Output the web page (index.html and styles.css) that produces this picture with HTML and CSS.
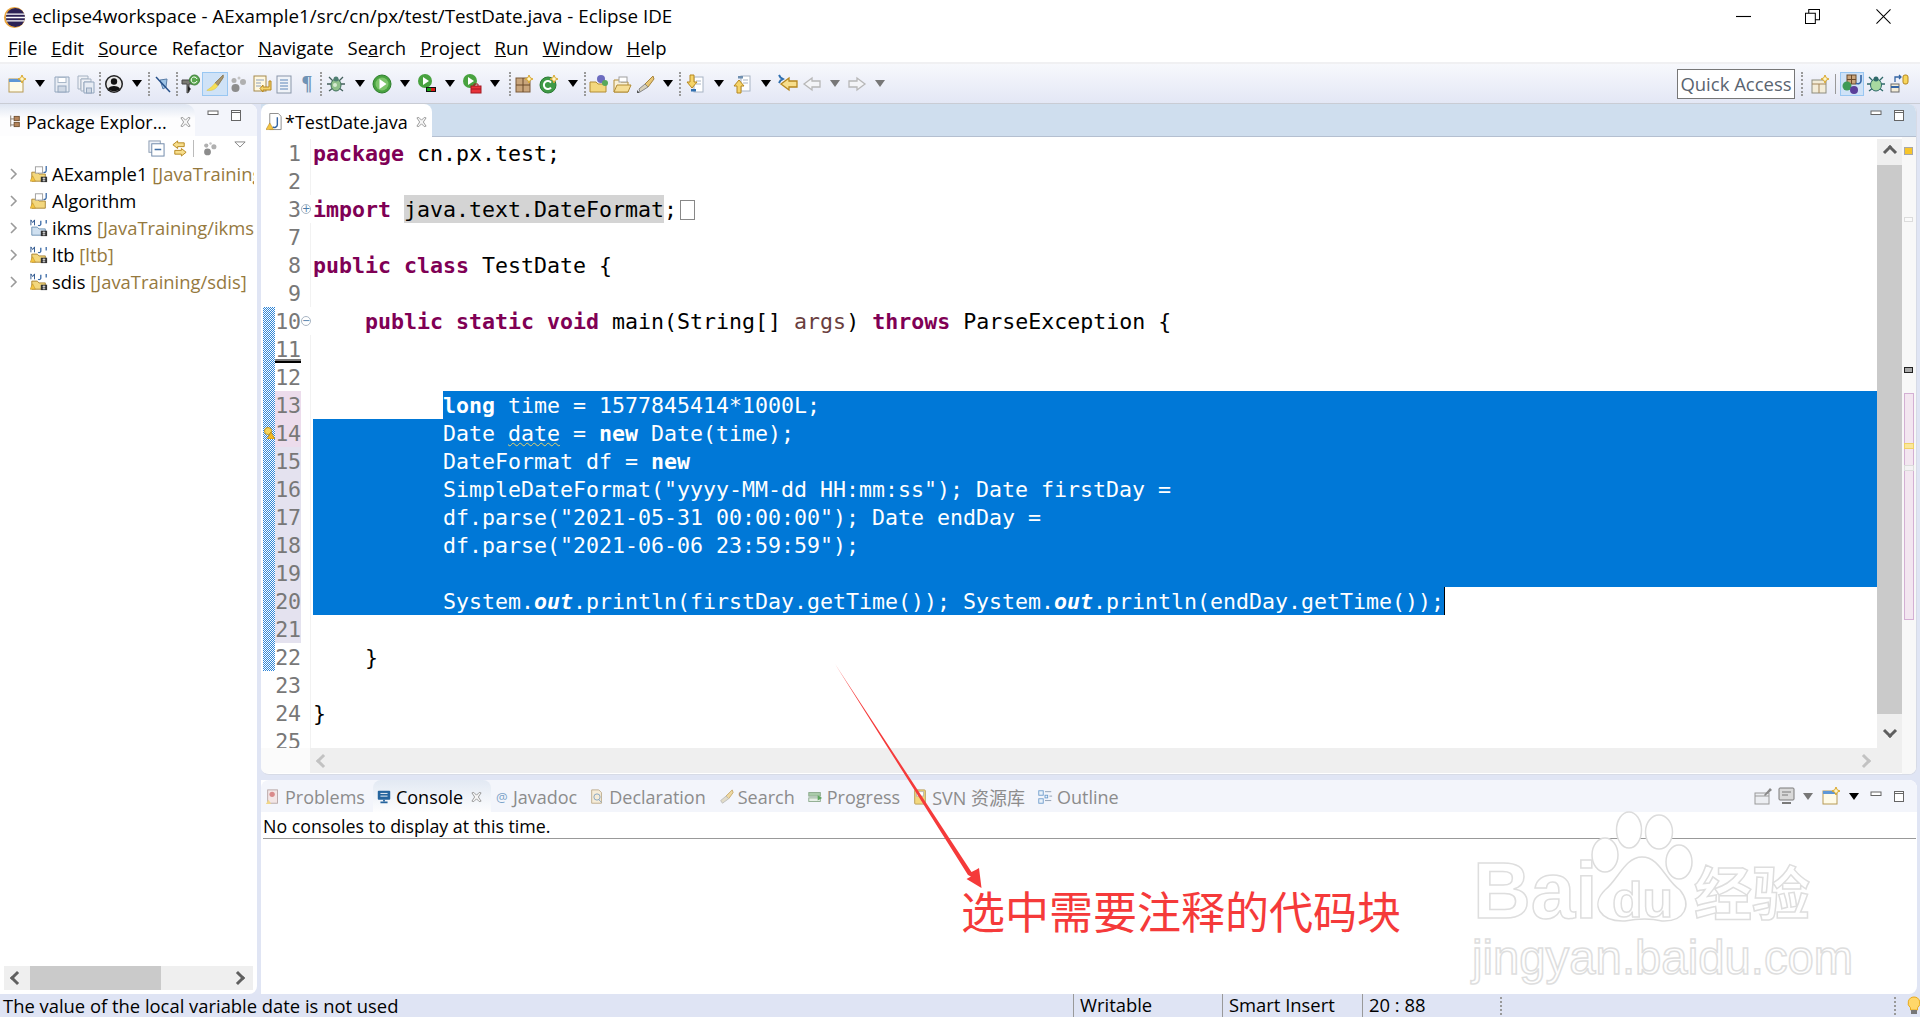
FILE: index.html
```html
<!DOCTYPE html>
<html lang="en">
<head>
<meta charset="utf-8">
<title>eclipse4workspace</title>
<link rel="stylesheet" href="styles.css">
</head>
<body>
<svg class="defs" width="0" height="0">
  <symbol id="new" viewBox="0 0 20 20"><rect x="2" y="5" width="14" height="13" fill="#fffbe8" stroke="#b79a55"/><rect x="2" y="5" width="14" height="3" fill="#5f97d6"/><path d="M15 1l1.2 2.8 2.8 1.2-2.8 1.2-1.2 2.8-1.2-2.8-2.8-1.2 2.8-1.2z" fill="#fff6c8" stroke="#d9a72b"/></symbol>
  <symbol id="save" viewBox="0 0 20 20"><path d="M3 3h14v15H3z" fill="#e8edf4" stroke="#93a6bd"/><rect x="6" y="3.5" width="8" height="5" fill="#fff" stroke="#a9b8c9"/><rect x="6" y="12" width="8" height="6" fill="#cfd8e4" stroke="#93a6bd"/></symbol>
  <symbol id="saveall" viewBox="0 0 20 20"><path d="M2 2h10v3H5v10H2z" fill="#eef1f6" stroke="#a5b2c2"/><path d="M5 5h10v3H8v9H5z" fill="#eef1f6" stroke="#a5b2c2"/><path d="M8 8h10v11H8z" fill="#e8edf4" stroke="#93a6bd"/><rect x="10.500" y="14" width="5" height="5" fill="#cfd8e4" stroke="#93a6bd"/></symbol>
  <symbol id="person" viewBox="0 0 20 20"><circle cx="10" cy="10" r="9" fill="#222"/><circle cx="10" cy="10" r="7.500" fill="#e9e9e9"/><circle cx="10" cy="7.500" r="3.200" fill="#111"/><path d="M4 15c1-4 11-4 12 0-3 3-9 3-12 0z" fill="#111"/></symbol>
  <symbol id="pin" viewBox="0 0 20 20"><path d="M7 6l7-1-1 8-3 2z" fill="#9fc4e6" stroke="#5a7ea8"/><path d="M3 3l14 15" stroke="#26508a" stroke-width="1.500"/></symbol>
  <symbol id="wrench" viewBox="0 0 20 20"><path d="M1 6h11v4H8v8l-2 1V10H1z" fill="#7a7a72" stroke="#444"/><path d="M7 12l3 3-3 3z" fill="#222"/><circle cx="13.500" cy="6" r="5" fill="#5aa84e" stroke="#3e7d3b"/><path d="M16 5a3 3 0 1 0 0 2" fill="none" stroke="#fff"/></symbol>
  <symbol id="brush" viewBox="0 0 22 22"><path d="M20 1l-9 9 3 3 6-9z" fill="#a8956c" stroke="#8a7750"/><path d="M11 10c-2 3-6 6-9 8 5 1 10-1 12-5z" fill="#f6df56" stroke="#d9bf38" stroke-width=".5"/></symbol>
  <symbol id="steps" viewBox="0 0 20 20"><circle cx="6.500" cy="14" r="4" fill="#8c8c8c"/><circle cx="5" cy="6.500" r="2.500" fill="#b0b0b0"/><circle cx="14" cy="8" r="3" fill="#b0b0b0"/><circle cx="10" cy="4" r="1.500" fill="#c6c6c6"/></symbol>
  <symbol id="hist" viewBox="0 0 20 20"><rect x="2" y="2" width="12" height="15" fill="#fff8e0" stroke="#a58a4c"/><path d="M4 6h8M4 9h5M4 12h5" stroke="#8ea0bd"/><path d="M17 7v6h-6v-2l-3 3.500 3 3.500v-2h8V7z" fill="#f5d46a" stroke="#b6871e"/></symbol>
  <symbol id="lines" viewBox="0 0 20 20"><rect x="3" y="2" width="14" height="17" fill="#f0f3f8" stroke="#8996a9"/><path d="M6 6h8M6 9h8M6 12h8M6 15h8" stroke="#5d86b9"/></symbol>
  <symbol id="bug" viewBox="0 0 20 20"><path d="M3 3l4 4M17 3l-4 4M1 10h4M19 10h-4M3 17l4-3M17 17l-4-3" stroke="#44605c" stroke-width="1.300"/><ellipse cx="10" cy="11" rx="5" ry="6" fill="#8fc08a" stroke="#3d6f5a"/><circle cx="10" cy="5" r="2.500" fill="#4f7f72"/><circle cx="9" cy="11" r="2" fill="#d7ead2"/></symbol>
  <symbol id="run" viewBox="0 0 20 20"><circle cx="10" cy="10" r="9" fill="#48a23f" stroke="#2d7e2c"/><circle cx="10" cy="10" r="6.500" fill="#7cc46a"/><path d="M7.500 5l7 5-7 5z" fill="#fff"/></symbol>
  <symbol id="runx" viewBox="0 0 20 20"><circle cx="8" cy="7" r="7" fill="#48a23f"/><path d="M6 3l6 4-6 4z" fill="#fff"/><rect x="9" y="13" width="10" height="5" fill="#111"/><rect x="10" y="14" width="4" height="3" fill="#15a315"/><rect x="14" y="14" width="4" height="3" fill="#d81818"/></symbol>
  <symbol id="runt" viewBox="0 0 20 20"><circle cx="8" cy="7" r="7" fill="#48a23f"/><path d="M6 3l6 4-6 4z" fill="#fff"/><rect x="9" y="12" width="10" height="7" fill="#e8333a" stroke="#a51920"/><path d="M12 12v-2h4v2M9 15h10" stroke="#a51920" fill="none"/></symbol>
  <symbol id="pkg" viewBox="0 0 20 20"><rect x="2" y="4" width="14" height="14" fill="#c9a57c" stroke="#7a5a3a"/><path d="M2 11h14M9 4v14" stroke="#6a4a2a"/><path d="M15 1l1.200 2.800 2.800 1.200-2.800 1.200-1.200 2.800-1.200-2.800-2.800-1.200 2.800-1.200z" fill="#fff6c8" stroke="#d9a72b"/></symbol>
  <symbol id="cls" viewBox="0 0 20 20"><circle cx="9" cy="11" r="8" fill="#3f9a46" stroke="#2c7a35"/><path d="M12 8.500a4 4 0 1 0 0 5" fill="none" stroke="#fff" stroke-width="2"/><path d="M15 1l1.200 2.800 2.800 1.200-2.800 1.200-1.200 2.800-1.200-2.800-2.800-1.200 2.800-1.200z" fill="#fff6c8" stroke="#d9a72b"/></symbol>
  <symbol id="folderp" viewBox="0 0 20 20"><path d="M1 8h6l2 2h8v8H1z" fill="#f3d77e" stroke="#b28c35"/><circle cx="12" cy="5" r="4" fill="#6c6cc0"/><circle cx="16" cy="9" r="3" fill="#58a85c"/></symbol>
  <symbol id="foldero" viewBox="0 0 20 20"><path d="M2 8V6h5l2 2h7v10H2z" fill="#f8f0d8" stroke="#b28c35"/><path d="M2 18l3-7h14l-3 7z" fill="#f5dd95" stroke="#b28c35"/><rect x="7" y="3" width="8" height="5" fill="#fff" stroke="#a0a0a0"/></symbol>
  <symbol id="pen" viewBox="0 0 20 20"><path d="M18 2l-8 8 3 3 6-8z" fill="#e7c676" stroke="#a8843b"/><path d="M10 10l-6 5 1 3 8-5z" fill="#d8d0b8" stroke="#888"/><path d="M2 16l3 3-3 0z" fill="#555"/></symbol>
  <symbol id="down" viewBox="0 0 20 20"><rect x="9" y="3" width="9" height="15" fill="#fff" stroke="#a8b4c4"/><path d="M11 7h5M11 10h5" stroke="#a8b4c4"/><rect x="6" y="15" width="5" height="2.500" fill="#2f6fb0"/><path d="M5 1h4v7h3l-5 6-5-6h3z" fill="#f5d46a" stroke="#b6871e"/></symbol>
  <symbol id="up" viewBox="0 0 20 20"><rect x="9" y="2" width="9" height="15" fill="#fff" stroke="#a8b4c4"/><path d="M11 6h5M11 9h5" stroke="#a8b4c4"/><rect x="6" y="2" width="5" height="2.500" fill="#6f8fb0"/><path d="M5 19h4v-7h3L7 6l-5 6h3z" fill="#f5d46a" stroke="#b6871e"/></symbol>
  <symbol id="last" viewBox="0 0 20 20"><path d="M19 7v6h-8v3L3 10l8-6v3z" fill="#f7de8c" stroke="#b6871e" stroke-width="1.300"/><path d="M1 1l1.500 2.500L5 5l-2.500 1.500L1 9" stroke="#2f6fb0" fill="none" stroke-width="2"/></symbol>
  <symbol id="back" viewBox="0 0 20 20"><path d="M18 7v6h-8v3L2 10l8-6v3z" fill="#f3f4f7" stroke="#b7b7b7" stroke-width="1.300"/></symbol>
  <symbol id="fwd" viewBox="0 0 20 20"><path d="M2 7v6h8v3l8-6-8-6v3z" fill="#f3f4f7" stroke="#b7b7b7" stroke-width="1.300"/></symbol>
  <symbol id="persp" viewBox="0 0 20 20"><rect x="2" y="6" width="14" height="13" fill="#f3ecd8" stroke="#8d8d80"/><path d="M2 10h14M9 10v9" stroke="#a5865a"/><path d="M15 1l1.200 2.800 2.800 1.200-2.800 1.200-1.200 2.800-1.200-2.800-2.800-1.200 2.800-1.200z" fill="#fff6c8" stroke="#d9a72b"/></symbol>
  <symbol id="javap" viewBox="0 0 20 20"><rect x="5" y="1" width="9" height="9" fill="#c9a57c" stroke="#6a4a2a"/><path d="M5 5.500h9M9.500 1v9" stroke="#6a4a2a"/><path d="M19 1v6a3 3 0 0 1-5 2" fill="none" stroke="#3465a4" stroke-width="1.600"/><circle cx="5" cy="12" r="4.500" fill="#3f9a56"/><circle cx="12" cy="16" r="4" fill="#5a3f9a"/></symbol>
  <symbol id="dbgp" viewBox="0 0 20 20"><path d="M3 3l4 4M17 3l-4 4M1 10h4M19 10h-4M3 17l4-3M17 17l-4-3" stroke="#2f6a6a" stroke-width="1.300"/><ellipse cx="10" cy="11" rx="5.500" ry="6" fill="#a7d9a0" stroke="#2f6a6a"/><circle cx="10" cy="5" r="2.500" fill="#2f6a6a"/></symbol>
  <symbol id="teamp" viewBox="0 0 20 20"><rect x="1" y="10" width="8" height="8" fill="#f3ecd8" stroke="#6a6a6a"/><path d="M1 13h8" stroke="#3465a4" stroke-width="2"/><path d="M5 8V3h6M9 1l2 2-2 2" fill="none" stroke="#3465a4" stroke-width="1.300"/><rect x="13" y="1" width="5" height="9" rx="2" fill="#f7d65c" stroke="#b6871e"/></symbol>
  <symbol id="tabx" viewBox="0 0 12 12"><path d="M1 1.500L3 1l3 3 3-3 2 .5-3 4.500 3 4.500-2 .5-3-3-3 3-2-.5 3-4.500z" fill="#f6f6f6" stroke="#8c8c8c" stroke-width=".9"/></symbol>
  <symbol id="min" viewBox="0 0 14 14"><rect x="2" y="3" width="10" height="3.500" fill="#fff" stroke="#666"/></symbol>
  <symbol id="max" viewBox="0 0 14 14"><rect x="2.500" y="2.500" width="9" height="10" fill="#fff" stroke="#666"/><path d="M2.500 4.500h9" stroke="#666"/></symbol>
  <symbol id="pe" viewBox="0 0 14 18"><path d="M2 2v13M2 6h4M2 13h4" stroke="#7a6a5a"/><rect x="6" y="3" width="6" height="5" fill="#b5845a" stroke="#6a4a2a"/><rect x="6" y="10" width="6" height="5" fill="#b5845a" stroke="#6a4a2a"/></symbol>
  <symbol id="jfile" viewBox="0 0 18 20"><path d="M4 1h9l3 3v14H4z" fill="#fff" stroke="#8a8a8a"/><path d="M12 5v8a3 3 0 0 1-5 2" stroke="#3465a4" stroke-width="1.500" fill="none"/><path d="M4 11l4 7H0z" fill="#f5c542" stroke="#b6871e" stroke-width=".6"/></symbol>
  <symbol id="collapse" viewBox="0 0 18 18"><rect x="1" y="1" width="12" height="12" fill="#eef2f8" stroke="#8a9bb0"/><rect x="4" y="4" width="13" height="13" fill="#fff" stroke="#6d87a8"/><path d="M7 10h7" stroke="#3f6ea5" stroke-width="1.500"/></symbol>
  <symbol id="link" viewBox="0 0 18 18"><path d="M2 5l5-4v2h7v4H7v2zM16 13l-5 4v-2H4v-4h7V9z" fill="#f7de8c" stroke="#b6871e"/></symbol>
  <symbol id="chevr" viewBox="0 0 10 14"><path d="M2 2l5 5-5 5" fill="none" stroke="#9a9a9a" stroke-width="1.600"/></symbol>
  <symbol id="prj1" viewBox="0 0 20 20"><path d="M2 8h6l2 2h7v8H2z" fill="#f3d77e" stroke="#a88230"/><rect x="6" y="2" width="8" height="7" fill="#fff" stroke="#9a9a9a"/><path d="M18 1v5a2 2 0 0 1-3 2" fill="none" stroke="#3465a4" stroke-width="1.400"/><path d="M3 12l3 6H0z" fill="#f5c542" stroke="#b6871e" stroke-width=".5"/><rect x="12" y="13" width="7" height="6" fill="#333"/><path d="M14 15h3M14 17h3M15.500 13.500v5" stroke="#fff" stroke-width=".7"/></symbol>
  <symbol id="prj2" viewBox="0 0 20 20"><path d="M2 8h6l2 2h7v8H2z" fill="#f3d77e" stroke="#a88230"/><rect x="6" y="2" width="8" height="7" fill="#fff" stroke="#9a9a9a"/><path d="M18 1v5a2 2 0 0 1-3 2" fill="none" stroke="#3465a4" stroke-width="1.400"/><path d="M3 12l3 6H0z" fill="#f5c542" stroke="#b6871e" stroke-width=".5"/></symbol>
  <symbol id="prj3" viewBox="0 0 20 20"><path d="M2 9h6l2 2h7v7H2z" fill="#cfe0f0" stroke="#6a8fb0"/><path d="M1 1v6M1 1l2 3 2-3v6" stroke="#26508a" fill="none"/><path d="M12 2v4a2 2 0 0 1-3 1" fill="none" stroke="#3465a4" stroke-width="1.400"/><path d="M18 1v4" stroke="#3465a4" stroke-width="1.400"/><rect x="12" y="13" width="7" height="6" fill="#333"/><path d="M14 15h3M14 17h3M15.500 13.500v5" stroke="#fff" stroke-width=".7"/></symbol>
  <symbol id="prj4" viewBox="0 0 20 20"><path d="M2 9h6l2 2h7v7H2z" fill="#f3d77e" stroke="#a88230"/><path d="M1 1v6M1 1l2 3 2-3v6" stroke="#26508a" fill="none"/><path d="M12 2v4a2 2 0 0 1-3 1" fill="none" stroke="#3465a4" stroke-width="1.400"/><path d="M18 1v4" stroke="#3465a4" stroke-width="1.400"/><path d="M3 12l3 6H0z" fill="#f5c542" stroke="#b6871e" stroke-width=".5"/><rect x="12" y="13" width="7" height="6" fill="#333"/><path d="M14 15h3M14 17h3M15.500 13.500v5" stroke="#fff" stroke-width=".7"/></symbol>
  <symbol id="prob" viewBox="0 0 18 18"><rect x="3" y="1" width="11" height="15" fill="#f3e6e6" stroke="#b5a5a5"/><circle cx="8" cy="6" r="3" fill="#d98a8a"/><path d="M4 12l3 5H1z" fill="#f0d68a"/></symbol>
  <symbol id="con" viewBox="0 0 18 18"><rect x="2" y="2" width="14" height="10" rx="1" fill="#26659e"/><path d="M5 5h8M5 8h8" stroke="#fff"/><path d="M5 15h8" stroke="#26659e" stroke-width="2"/><path d="M9 12v2" stroke="#26659e" stroke-width="2"/></symbol>
  <symbol id="decl" viewBox="0 0 18 18"><path d="M3 1h8l3 3v12H3z" fill="#f6ecd8" stroke="#bba98a"/><circle cx="9" cy="9" r="3.500" fill="none" stroke="#7fa0c0"/><path d="M11 12l3 3" stroke="#7fa0c0"/></symbol>
  <symbol id="srch" viewBox="0 0 18 18"><path d="M16 1l-7 7 3 3 5-7z" fill="#efd9a3" stroke="#c5a869"/><path d="M9 8l-6 5 2 3 7-5z" fill="#e2dcc8" stroke="#bbb"/></symbol>
  <symbol id="prog" viewBox="0 0 18 18"><rect x="2" y="4" width="13" height="4" fill="#aacbaa" stroke="#8aa88a"/><rect x="2" y="10" width="13" height="4" fill="#e6efe6" stroke="#8aa88a"/><path d="M12 7l5 3-5 3z" fill="#5da55d"/></symbol>
  <symbol id="svn" viewBox="0 0 18 18"><rect x="3" y="1" width="12" height="16" rx="1" fill="#f3d77e" stroke="#b69b52"/><rect x="5" y="3" width="8" height="5" fill="#fff" stroke="#b5b5b5"/></symbol>
  <symbol id="outl" viewBox="0 0 18 18"><rect x="2" y="2" width="5" height="5" fill="#eaf2fa" stroke="#6d9bcb"/><rect x="2" y="11" width="5" height="5" fill="#eaf2fa" stroke="#6d9bcb"/><rect x="9" y="7" width="3" height="3" fill="#eaf2fa" stroke="#6d9bcb"/><path d="M9 3h7M14 8h3M9 13h7" stroke="#8a9bb0"/></symbol>
  <symbol id="pinv" viewBox="0 0 20 20"><rect x="2" y="7" width="14" height="11" fill="#eceef2" stroke="#9a9a9a"/><path d="M2 10h14" stroke="#9a9a9a"/><path d="M11 9l6-7 2 2-7 6z" fill="#888"/></symbol>
  <symbol id="mon" viewBox="0 0 20 20"><rect x="2" y="2" width="15" height="12" rx="1" fill="#d9d9d9" stroke="#7a7a7a"/><path d="M5 6h9M5 9h6" stroke="#7a7a7a"/><path d="M5 17h9" stroke="#7a7a7a" stroke-width="2"/></symbol>
  <symbol id="bulb" viewBox="0 0 14 20"><path d="M7 1a6 6 0 0 0-3.500 10.800V14h7v-2.200A6 6 0 0 0 7 1z" fill="#ffd76a" stroke="#e8a91c"/><rect x="4" y="14" width="6" height="4" fill="#777"/></symbol>
  <symbol id="vmenu" viewBox="0 0 14 8"><path d="M1 1h12L7 7z" fill="#fff" stroke="#777"/></symbol>
</svg>

<header class="titlebar">
  <svg class="applogo" viewBox="0 0 24 24"><circle cx="12" cy="12" r="11" fill="#e8a33a"/><circle cx="13" cy="12" r="10" fill="#2c2255"/><path d="M3 8.500h20M3 12h20M3.500 15.500h19" stroke="#fff" stroke-width="1.400"/></svg>
  <span class="titletext">eclipse4workspace - AExample1/src/cn/px/test/TestDate.java - Eclipse IDE</span>
  <div class="winctl">
    <svg class="wc wc-min" viewBox="0 0 16 16"><path d="M0 8h16" stroke="#000" stroke-width="1.200"/></svg>
    <svg class="wc wc-res" viewBox="0 0 16 16"><path d="M.5 4.500h10.500v11H.5zM4 4.500v-4h11.500v11h-4.500" fill="none" stroke="#000" stroke-width="1.100"/></svg>
    <svg class="wc wc-cls" viewBox="0 0 16 16"><path d="M.5.500l15 15M15.500.500l-15 15" stroke="#000" stroke-width="1.100"/></svg>
  </div>
</header>

<nav class="menubar">
  <span><u>F</u>ile</span><span><u>E</u>dit</span><span><u>S</u>ource</span><span>Refac<u>t</u>or</span><span><u>N</u>avigate</span><span>Se<u>a</u>rch</span><span><u>P</u>roject</span><span><u>R</u>un</span><span><u>W</u>indow</span><span><u>H</u>elp</span>
</nav>

<div class="toolbar">
  <span class="i"><svg><use href="#new"/></svg></span><span class="c"></span>
  <span class="i"><svg><use href="#save"/></svg></span>
  <span class="i"><svg><use href="#saveall"/></svg></span><span class="g"></span>
  <span class="i"><svg><use href="#person"/></svg></span><span class="c"></span><span class="g"></span>
  <span class="i"><svg><use href="#pin"/></svg></span><span class="g"></span>
  <span class="i"><svg><use href="#wrench"/></svg></span>
  <span class="i on"><svg><use href="#brush"/></svg></span>
  <span class="i"><svg><use href="#steps"/></svg></span>
  <span class="i n"><svg><use href="#hist"/></svg></span>
  <span class="i n"><svg><use href="#lines"/></svg></span>
  <span class="i para">¶</span><span class="g"></span>
  <span class="i w"><svg><use href="#bug"/></svg></span><span class="c"></span>
  <span class="i"><svg><use href="#run"/></svg></span><span class="c"></span>
  <span class="i"><svg><use href="#runx"/></svg></span><span class="c"></span>
  <span class="i"><svg><use href="#runt"/></svg></span><span class="c"></span><span class="g g3"></span>
  <span class="i"><svg><use href="#pkg"/></svg></span>
  <span class="i w"><svg><use href="#cls"/></svg></span><span class="c"></span><span class="g"></span>
  <span class="i"><svg><use href="#folderp"/></svg></span>
  <span class="i n"><svg><use href="#foldero"/></svg></span>
  <span class="i"><svg><use href="#pen"/></svg></span><span class="c"></span><span class="g"></span>
  <span class="i w"><svg><use href="#down"/></svg></span><span class="c"></span>
  <span class="i w"><svg><use href="#up"/></svg></span><span class="c"></span>
  <span class="i"><svg><use href="#last"/></svg></span>
  <span class="i"><svg><use href="#back"/></svg></span><span class="c off"></span>
  <span class="i"><svg><use href="#fwd"/></svg></span><span class="c off"></span>
  <div class="tb-right">
    <div class="quick">Quick Access</div>
    <span class="g grip-r"></span>
    <span class="i"><svg><use href="#persp"/></svg></span>
    <span class="vsep"></span>
    <span class="i on"><svg><use href="#javap"/></svg></span>
    <span class="i"><svg><use href="#dbgp"/></svg></span>
    <span class="i"><svg><use href="#teamp"/></svg></span>
  </div>
</div>

<main class="workbench">
  <aside class="leftstack">
    <div class="leftbar">
      <div class="pe-tab">
        <svg class="ic14"><use href="#pe"/></svg>
        <span class="pe-title">Package Explor...</span>
        <svg class="closex"><use href="#tabx"/></svg>
      </div>
      <div class="minmax"><svg class="mm"><use href="#min"/></svg><svg class="mm"><use href="#max"/></svg></div>
    </div>
    <div class="viewtools">
      <svg class="vt"><use href="#collapse"/></svg>
      <svg class="vt"><use href="#link"/></svg>
      <span class="vt-sep"></span>
      <svg class="vt"><use href="#steps"/></svg>
      <svg class="vt-menu"><use href="#vmenu"/></svg>
    </div>
    <ul class="tree">
      <li><svg class="chev"><use href="#chevr"/></svg><svg class="prj"><use href="#prj1"/></svg><span class="nm">AExample1 <em>[JavaTraining/AExample1]</em></span></li>
      <li><svg class="chev"><use href="#chevr"/></svg><svg class="prj"><use href="#prj2"/></svg><span class="nm">Algorithm</span></li>
      <li><svg class="chev"><use href="#chevr"/></svg><svg class="prj"><use href="#prj3"/></svg><span class="nm">ikms <em>[JavaTraining/ikms]</em></span></li>
      <li><svg class="chev"><use href="#chevr"/></svg><svg class="prj"><use href="#prj4"/></svg><span class="nm">ltb <em>[ltb]</em></span></li>
      <li><svg class="chev"><use href="#chevr"/></svg><svg class="prj"><use href="#prj4"/></svg><span class="nm">sdis <em>[JavaTraining/sdis]</em></span></li>
    </ul>
    <div class="lscroll">
      <span class="arr arr-l"></span>
      <span class="lthumb"></span>
      <span class="arr arr-r"></span>
    </div>
  </aside>

  <section class="rightcol">
    <div class="edstack">
      <div class="edbar">
        <div class="ed-tab">
          <svg class="jf"><use href="#jfile"/></svg>
          <span>*TestDate.java</span>
          <svg class="closex"><use href="#tabx"/></svg>
        </div>
        <div class="minmax"><svg class="mm"><use href="#min"/></svg><svg class="mm"><use href="#max"/></svg></div>
      </div>
      <div class="edbody">
        <div class="edleft">
          <div class="edtop">
            <div class="gutter">
              <div class="gr"><b></b><i>1</i><s></s></div>
              <div class="gr"><b></b><i>2</i><s></s></div>
              <div class="gr"><b></b><i>3</i><s class="fold">+</s></div>
              <div class="gr"><b></b><i>7</i><s></s></div>
              <div class="gr"><b></b><i>8</i><s></s></div>
              <div class="gr"><b></b><i>9</i><s></s></div>
              <div class="gr bl"><b></b><i>10</i><s class="fold">−</s></div>
              <div class="gr bl cur"><b></b><i>11</i><s></s></div>
              <div class="gr bl"><b></b><i>12</i><s></s></div>
              <div class="gr bl pk"><b></b><i>13</i><s></s></div>
              <div class="gr bl pk"><b><svg class="warn" viewBox="0 0 12 12"><circle cx="5" cy="4" r="3.500" fill="#f7d65c" stroke="#c79a22"/><path d="M8 5l4 7H4z" fill="#f5b81e" stroke="#a87a10" stroke-width=".6"/></svg></b><i>14</i><s></s></div>
              <div class="gr bl lv"><b></b><i>15</i><s></s></div>
              <div class="gr bl lv"><b></b><i>16</i><s></s></div>
              <div class="gr bl lv"><b></b><i>17</i><s></s></div>
              <div class="gr bl lv"><b></b><i>18</i><s></s></div>
              <div class="gr bl lv"><b></b><i>19</i><s></s></div>
              <div class="gr bl lv"><b></b><i>20</i><s></s></div>
              <div class="gr bl lv"><b></b><i>21</i><s></s></div>
              <div class="gr bl"><b></b><i>22</i><s></s></div>
              <div class="gr"><b></b><i>23</i><s></s></div>
              <div class="gr"><b></b><i>24</i><s></s></div>
              <div class="gr"><b></b><i>25</i><s></s></div>
            </div>
            <div class="code">
              <div class="ln"><span class="k">package</span> cn.px.test;</div>
              <div class="ln"></div>
              <div class="ln"><span class="k">import</span> <span class="occ">java.text.DateFormat</span>;<span class="foldbox"></span></div>
              <div class="ln"></div>
              <div class="ln"><span class="k">public</span> <span class="k">class</span> TestDate {</div>
              <div class="ln"></div>
              <div class="ln">    <span class="k">public</span> <span class="k">static</span> <span class="k">void</span> main(String[] <span class="arg">args</span>) <span class="k">throws</span> ParseException {</div>
              <div class="ln"></div>
              <div class="ln"></div>
              <div class="ln sel first"><span class="b">long</span> time = 1577845414*1000L;</div>
              <div class="ln sel">          Date <span class="wavy">date</span> = <span class="b">new</span> Date(time);</div>
              <div class="ln sel">          DateFormat df = <span class="b">new</span></div>
              <div class="ln sel">          SimpleDateFormat("yyyy-MM-dd HH:mm:ss"); Date firstDay =</div>
              <div class="ln sel">          df.parse("2021-05-31 00:00:00"); Date endDay =</div>
              <div class="ln sel">          df.parse("2021-06-06 23:59:59");</div>
              <div class="ln sel"></div>
              <div class="ln sel last">          System.<span class="bi">out</span>.println(firstDay.getTime()); System.<span class="bi">out</span>.println(endDay.getTime());</div>
              <div class="ln"></div>
              <div class="ln">    }</div>
              <div class="ln"></div>
              <div class="ln">}</div>
              <div class="ln"></div>
            </div>
            <div class="vscroll">
              <span class="varr"><span class="arr arr-u"></span></span>
              <span class="vthumb"></span>
              <span class="varr"><span class="arr arr-d"></span></span>
            </div>
          </div>
          <div class="hrow">
            <span class="hblank"></span>
            <div class="hscroll"><span class="arr arr-l faint"></span><span class="arr arr-r faint"></span></div>
          </div>
        </div>
        <div class="ruler">
          <span class="mk mk-y"></span>
          <span class="mk mk-g"></span>
          <span class="mk mk-d"></span>
          <span class="mk mk-p"></span>
          <span class="mk mk-o"></span>
          <span class="mk mk-w"></span>
        </div>
      </div>
    </div>

    <div class="constack">
      <div class="conbar">
        <span class="ct ct-1"><svg class="tic"><use href="#prob"/></svg>Problems</span>
        <span class="ct ct-on"><svg class="tic"><use href="#con"/></svg>Console<svg class="closex"><use href="#tabx"/></svg></span>
        <span class="ct"><span class="at">@</span>Javadoc</span>
        <span class="ct"><svg class="tic"><use href="#decl"/></svg>Declaration</span>
        <span class="ct"><svg class="tic"><use href="#srch"/></svg>Search</span>
        <span class="ct"><svg class="tic"><use href="#prog"/></svg>Progress</span>
        <span class="ct"><svg class="tic"><use href="#svn"/></svg>SVN 资源库</span>
        <span class="ct"><svg class="tic"><use href="#outl"/></svg>Outline</span>
        <div class="con-tools">
          <svg class="ct-ic"><use href="#pinv"/></svg>
          <svg class="ct-ic ct-mon"><use href="#mon"/></svg>
          <span class="c off"></span>
          <svg class="ct-ic ct-new"><use href="#new"/></svg>
          <span class="c ct-car"></span>
          <svg class="mm"><use href="#min"/></svg><svg class="mm"><use href="#max"/></svg>
        </div>
      </div>
      <div class="conhead">No consoles to display at this time.</div>
    </div>
  </section>
</main>

<footer class="status">
  <span class="st-msg">The value of the local variable date is not used</span>
  <span class="st-f st-w">Writable</span>
  <span class="st-f st-s">Smart Insert</span>
  <span class="st-f st-p">20 : 88</span>
  <span class="st-grip"></span>
  <span class="st-grip st-grip2"></span>
  <svg class="st-bulb"><use href="#bulb"/></svg>
</footer>

<svg class="arrow" viewBox="0 0 160 240"><path d="M5 4L141.500 212 146.500 209.500 149 208 151.500 228 136.500 219 141 216.500 138 215z" fill="#f53a3a"/></svg>
<div class="note">选中需要注释的代码块</div>

<div class="watermark">
  <svg class="paw" viewBox="0 0 110 120"><g fill="#fff" stroke="#dcdcdc" stroke-width="1.500"><ellipse cx="44" cy="19" rx="12.500" ry="18"/><ellipse cx="74" cy="21" rx="13.500" ry="17"/><ellipse cx="20" cy="44" rx="13" ry="17"/><ellipse cx="94" cy="51" rx="13" ry="17"/><path d="M57 46c-17 0-24 23-37 33-15 15-5 32 20 31 15-3 25-3 37 0 23 1 30-16 18-31-15-10-20-33-38-33z"/></g></svg>
  <span class="wm wm-bai">Bai</span>
  <span class="wm wm-du">du</span>
  <span class="wm wm-jy">经验</span>
  <span class="wm wm-url">jingyan.baidu.com</span>
</div>
</body>
</html>
```

FILE: styles.css
```css
* { box-sizing: border-box; }
html, body { margin: 0; padding: 0; }
body {
  width: 1920px; height: 1017px; overflow: hidden; position: relative;
  display: flex; flex-direction: column;
  background: #fff; color: #000;
  font-family: "Open Sans", "Noto Sans", "Noto Sans CJK SC", sans-serif;
  font-size: 18px;
}
.defs { position: absolute; }
svg { display: block; }

.titlebar { height: 32px; display: flex; align-items: center; padding: 0 0 0 2px; }
.applogo { width: 25px; height: 23px; margin-top: 2px; }
.titletext { margin-left: 5px; font-size: 18.800px; color: #000; }
.winctl { margin-left: auto; display: flex; align-items: center; padding-right: 29px; }
.wc { width: 15px; height: 15px; }
.wc-res { margin-left: 54px; }
.wc-cls { margin-left: 56px; }

.menubar { height: 30px; display: flex; gap: 14px; align-items: center; padding: 0 0 0 8px; font-size: 18.500px; }

.toolbar {
  height: 42px; display: flex; align-items: center; padding-left: 5px;
  border-top: 2px solid #f0f0f2; border-bottom: 1px solid #c9ccd4;
  background: linear-gradient(#f7f8fc, #e3e7f5);
}
.i { width: 24px; height: 22px; display: flex; align-items: center; justify-content: center; flex: none; }
.i svg { width: 20px; height: 20px; }
.i.n { width: 22px; }
.i.w { width: 26px; }
.i.on { background: #cfe2f7; outline: 1px solid #99c7f2; outline-offset: 0; }
.para { color: #6f93b5; font-family: "Liberation Serif", serif; font-weight: 700; font-size: 20px; }
.c { width: 21px; flex: none; display: flex; justify-content: center; }
.c::before { content: ""; border: 5.500px solid transparent; border-top: 7px solid #000; border-bottom: 0; }
.c.off::before { border-top-color: #777; }
.g { width: 4px; height: 24px; flex: none; display: flex; justify-content: center; }
.g::before { content: ""; border-left: 2px dotted #9a9a9a; height: 24px; }
.g3 { margin-left: 3px; }
.tb-right { margin-left: auto; display: flex; align-items: center; padding-right: 8px; }
.quick { width: 118px; height: 30px; border: 1px solid #777; background: #fff; color: #5a6470; font-size: 18.500px; line-height: 27px; text-align: center; white-space: nowrap; }
.grip-r { margin-left: 5px; }
.grip-r + .i { margin-left: 4px; }
.vsep { width: 1px; height: 20px; background: #999; margin: 0 5px 0 3px; flex: none; }
.tb-right .i.on { width: 22px; margin-right: 1px; }

.workbench { height: 890px; display: flex; background: #e0e5f4; padding-right: 3px; }
.leftstack { width: 257px; flex: none; background: #fff; display: flex; flex-direction: column; border-radius: 0 8px 8px 0; overflow: hidden; }
.leftbar { height: 32px; display: flex; background: #f3f5fb; flex: none; }
.leftbar .minmax { padding-right: 14px; }
.pe-tab { width: 195px; display: flex; align-items: center; background: linear-gradient(#dfe6f2, #fdfdfe 45%); border-radius: 0 10px 0 0; padding: 3px 0 0 9px; white-space: nowrap; }
.ic14 { width: 12px; height: 17px; flex: none; }
.pe-title { margin-left: 5px; font-size: 18px; width: 146px; overflow: hidden; }
.closex { width: 11px; height: 12px; flex: none; margin-left: 8px; }
.minmax { margin-left: auto; display: flex; padding: 4px 10px 0 0; gap: 9px; }
.mm { width: 14px; height: 14px; flex: none; }

.viewtools { height: 24px; flex: none; display: flex; align-items: center; padding-left: 148px; }
.vt { width: 17px; height: 17px; flex: none; margin-right: 6px; }
.vt-sep { width: 1px; height: 17px; background: #bbb; margin: 0 8px 0 -1px; }
.vt-menu { width: 12px; height: 7px; margin-left: 9px; margin-top: -7px; flex: none; }

.tree { list-style: none; margin: 0; padding: 0 3px 0 0; flex: 1; overflow: hidden; }
.tree li { height: 27px; display: flex; align-items: center; padding-left: 9px; white-space: nowrap; font-size: 18.400px; overflow: hidden; }
.chev { width: 10px; height: 14px; flex: none; }
.prj { width: 18px; height: 18px; flex: none; margin-left: 11px; }
.nm { margin-left: 4px; }
.nm em { font-style: normal; color: #95793e; }
.lscroll { height: 24px; margin: 0 4px 4px; flex: none; background: #efefef; display: flex; align-items: center; position: relative; padding-left: 8px; }
.lthumb { width: 131px; height: 24px; background: #cacaca; margin-left: 8px; }
.arr { display: block; width: 10px; height: 10px; border-left: 3px solid #5f5f5f; border-top: 3px solid #5f5f5f; flex: none; }
.arr-l { transform: rotate(-45deg); }
.arr-r { transform: rotate(135deg); }
.arr-u { transform: rotate(45deg); }
.arr-d { transform: rotate(225deg); }
.lscroll .arr-r { margin-left: auto; margin-right: 10px; }
.faint { border-color: #c2c2c2; }

.rightcol { flex: 1; margin-left: 4px; display: flex; flex-direction: column; gap: 5px; min-width: 0; }
.edstack { height: 671px; flex: none; background: #fff; border-radius: 0 8px 8px 8px; overflow: hidden; display: flex; flex-direction: column; border-right: 1px solid #d7dbe6; border-bottom: 1px solid #d7dbe6; }
.edbar { height: 33px; flex: none; display: flex; background: #cfdeee; border-bottom: 1px solid #b4bfd0; }
.ed-tab { width: 171px; background: #fff; border-radius: 8px 8px 0 0; display: flex; align-items: center; padding: 2px 0 0 5px; margin-bottom: -1px; white-space: nowrap; }
.jf { width: 17px; height: 20px; flex: none; }
.ed-tab span { margin-left: 2px; }
.ed-tab .closex { margin-left: 8px; }
.edbody { flex: 1; display: flex; min-height: 0; }
.edleft { flex: 1; display: flex; flex-direction: column; min-width: 0; }
.edtop { flex: 1; display: flex; min-height: 0; overflow: hidden; padding-top: 2px; }

.gutter { width: 50px; flex: none; font: 21.600px/30px "DejaVu Sans Mono", monospace; color: #787878; }
.gr { display: flex; height: 28px; }
.gr b { width: 12px; margin-left: 2px; flex: none; font-weight: 400; }
.gr i { width: 26px; height: 28px; flex: none; font-style: normal; text-align: right; letter-spacing: -.1px; white-space: nowrap; }
.gr s { width: 10px; flex: none; border-right: 1px solid #f2f2f2; text-decoration: none; }
.gr.bl b { background: repeating-conic-gradient(#2f86d8 0 25%, #fff 0 50%) 0 0 / 2px 2px; }
.gr.pk i { background: #ecdcec; }
.gr.lv i { background: #e4e2ef; }
.gr.cur i { text-decoration: underline; box-shadow: inset 0 -2px 0 #000; }
.warn { width: 12px; height: 12px; margin-top: 8px; }
.gr s.fold { height: 10px; width: 10px; margin-top: 9px; border: 1px solid #a9b5c3; border-radius: 50%; font: 10px/8px "DejaVu Sans", sans-serif; color: #4a7aa8; text-align: center; overflow: hidden; }

.code { flex: 1; min-width: 0; padding-left: 2px; font: 21.600px/30px "DejaVu Sans Mono", monospace; color: #000; overflow: hidden; }
.ln { height: 28px; white-space: pre; }
.k { color: #7f0055; font-weight: 700; }
.arg { color: #6a3e3e; }
.occ { background: #d4d4d4; display: inline-block; height: 28px; vertical-align: top; }
.foldbox { display: inline-block; width: 15px; height: 20px; border: 1px solid #888; margin-left: 3px; vertical-align: -3px; }
.sel { background: #0078d7; color: #fff; }
.sel.first { margin-left: 130px; }
.sel.last { width: 1132px; border-right: 1px solid #000; }
.b { font-weight: 700; }
.bi { font-weight: 700; font-style: italic; }
.wavy { text-decoration: underline wavy #e9d36a 1px; }

.vscroll { width: 25px; flex: none; background: #efefef; display: flex; flex-direction: column; }
.varr { height: 26px; flex: none; display: flex; align-items: center; justify-content: center; }
.vthumb { flex: 1; background: #cacaca; }
.vscroll .varr:last-child { height: 34px; }
.hrow { height: 25px; flex: none; display: flex; margin-bottom: 1px; }
.hblank { width: 49px; flex: none; background: #fbfbfb; }
.hscroll { flex: 1; background: #efefef; display: flex; align-items: center; justify-content: space-between; padding: 0 33px 0 8px; }
.ruler { width: 14px; flex: none; background: #f8f8f8; position: relative; }
.mk { position: absolute; left: 2px; width: 9px; }
.mk-y { top: 10px; height: 8px; background: #f7c52a; border: 1px solid #a8a8a8; }
.mk-g { top: 80px; height: 5px; background: #fafafa; border: 1px solid #dcdcdc; }
.mk-d { top: 230px; height: 6px; background: #aaa; border: 1px solid #222; }
.mk-p { top: 256px; height: 227px; background: #f3e6f0; border: 1px solid #d4b0d4; width: 10px; }
.mk-o { top: 306px; height: 6px; background: #fbe79a; border: 1px solid #f0d267; width: 10px; }
.mk-w { top: 328px; height: 6px; background: #f4f2f4; border: 1px solid #dcdcdc; width: 10px; }

.constack { flex: 1; background: #fff; border-radius: 0 8px 8px 0; overflow: hidden; display: flex; flex-direction: column; }
.conbar { height: 32px; flex: none; background: #f3f5fb; display: flex; align-items: center; padding-left: 3px; color: #8c8c8c; font-size: 18px; white-space: nowrap; border-radius: 8px 8px 0 0; }
.ct { display: flex; align-items: center; height: 32px; padding: 2px 12px 0 0; }
.tic { width: 16px; height: 18px; flex: none; margin-right: 4px; }
.ct-1 { padding-left: 1px; padding-right: 8px; }
.ct-on { background: linear-gradient(#e2e9f3, #fdfdfe); color: #000; border-radius: 8px 8px 0 0; width: 118px; padding-left: 3px; padding-right: 0; margin-right: 3px; }
.at { color: #7ba3c9; font-size: 13px; width: 14px; margin-left: 2px; margin-right: 3px; }
.con-tools { margin-left: auto; display: flex; align-items: center; padding-right: 11px; }
.ct-ic { width: 20px; height: 20px; flex: none; }
.ct-mon { margin-left: 4px; }
.ct-new { margin-left: 3px; }
.ct-car { margin-left: 2px; }
.con-tools .mm { margin-left: 9px; }
.con-tools .ct-car + .mm { margin-left: 5px; }
.conhead { margin-left: 2px; margin-right: 1px; height: 27px; border-bottom: 1px solid #999; font-size: 17.800px; line-height: 28px; color: #000; flex: none; }

.status { height: 23px; flex: none; background: #dfe4f4; display: flex; align-items: center; font-size: 18.400px; position: relative; white-space: nowrap; color: #000; padding-left: 3px; line-height: 21px; }
.st-msg { width: 1070px; flex: none; }
.st-f { border-left: 1px solid #999; padding-left: 6px; height: 23px; line-height: 21px; flex: none; }
.st-w { width: 149px; }
.st-s { width: 140px; }
.st-p { width: 138px; }
.st-grip { width: 3px; height: 18px; border-left: 2px dotted #999; flex: none; }
.st-grip2 { margin-left: 391px; }
.st-bulb { width: 14px; height: 20px; flex: none; margin-left: 10px; }

.arrow { position: absolute; left: 830px; top: 660px; width: 160px; height: 240px; }
.note { position: absolute; left: 961px; top: 878px; color: #f53a3a; font: 44px/64px "Noto Sans CJK SC", sans-serif; white-space: nowrap; }

.watermark { position: absolute; left: 1470px; top: 810px; width: 350px; height: 170px; }
.paw { position: absolute; left: 115px; top: 1px; width: 110px; height: 120px; }
.wm { position: absolute; white-space: nowrap; color: #fff; -webkit-text-stroke: 1.500px #dedede; }
.wm-bai { left: 3px; top: 38px; font: 700 80px/86px "Liberation Sans", sans-serif; }
.wm-du { left: 142px; top: 62px; font: 700 50px/56px "Liberation Sans", sans-serif; }
.wm-jy { left: 224px; top: 46px; font: 700 58px/68px "Noto Sans CJK SC", sans-serif; }
.wm-url { left: 2px; top: 120px; font: 400 47.300px/56px "Liberation Sans", sans-serif; }
```
